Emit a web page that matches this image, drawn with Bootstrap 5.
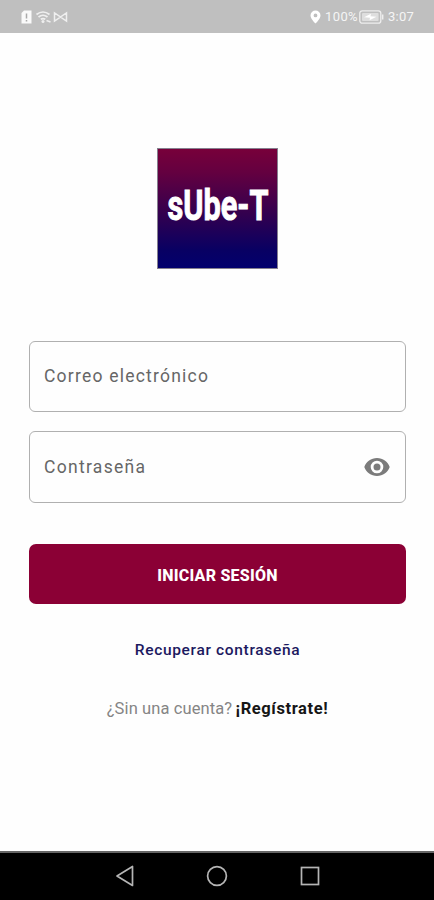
<!DOCTYPE html>
<html lang="es">
<head>
<meta charset="utf-8">
<meta name="viewport" content="width=device-width, initial-scale=1">
<title>sUbe-T</title>
<link href="https://cdn.jsdelivr.net/npm/bootstrap@5.3.0/dist/css/bootstrap.min.css" rel="stylesheet">
<style>
body{font-family:Roboto,"Liberation Sans",sans-serif;height:900px;overflow:hidden;background:#fefefe}
svg{display:block;flex-shrink:0;overflow:visible}
.statusbar{height:33px;background:#bfbfbf;color:#f5f5f5;font-size:13px;padding:1px 20px 0 20px;line-height:16px}
.pct{letter-spacing:.35px;margin:0 1px 0 4px}
.clock{letter-spacing:.25px;margin-left:4px}
.main-area{padding:115px 28px 0 29px}
.brand{margin-bottom:72px}
.field{height:71px;border:1px solid #b0b0b0;border-radius:6px;padding:0 15px 0 14px;color:#666;font-size:17.5px;background:#fefefe}
.field-mail{letter-spacing:1.22px;margin-bottom:19px}
.field-pass{height:72px;letter-spacing:1.3px;margin-bottom:41px}
.btn-login,.btn-login:hover{height:60px;background:#8b0035;color:#fff;border:0;border-radius:7px;font-weight:800;font-size:16px;letter-spacing:.22px;padding:3px 0 0}
.recover{font-size:15.5px;font-weight:500;color:#1c1960;letter-spacing:.66px;margin-top:35px;line-height:22px}
.signup{font-size:16.5px;color:#858585;margin-top:36px;line-height:24px;letter-spacing:.1px}
.signup a{color:#161616;font-weight:700;letter-spacing:.6px;margin-left:-1px}
.navkeys{height:49px;background:#000;border-top:2px solid #666;padding:0 113px 2px 113px}
</style>
<script src="https://cdn.jsdelivr.net/npm/bootstrap@5.3.0/dist/js/bootstrap.bundle.min.js"></script>
</head>
<body class="d-flex flex-column m-0">
<header class="statusbar d-flex justify-content-between align-items-center">
  <div class="d-flex align-items-center">
    <svg width="50" height="16" viewBox="0 0 50 16">
      <path d="M4 1.500h7.500v13H1.500V4z" fill="#fafafa"/><path d="M6.500 4.500v5M6.500 11v1.500" stroke="#aaa" stroke-width="1.500"/>
      <g fill="none" stroke="#efefef" stroke-width="1.700"><path d="M16.500 5.500q6.500-5 13 0M18.500 8q4.500-3.500 9 0M20.800 10.300q2.200-1.500 4.500 0"/><path d="M34.500 4v8l6-4zM46.500 4v8l-6-4z" stroke-width="1.500"/></g>
      <circle cx="23" cy="12.600" r="1.500" fill="#efefef"/><path d="M26.500 11.500l4 1.500" stroke="#efefef" stroke-width="1.500"/>
    </svg>
  </div>
  <div class="d-flex align-items-center">
    <svg width="11" height="14" viewBox="0 0 11 14"><path fill="#fff" fill-rule="evenodd" d="M5.500.5A5 5 0 0 0 .5 5.500C.5 9 5.500 13.500 5.500 13.500S10.500 9 10.500 5.500A5 5 0 0 0 5.500.5zM5.500 3.500a1.900 1.900 0 1 1 0 3.800 1.900 1.900 0 0 1 0-3.800z"/></svg>
    <span class="pct">100%</span>
    <svg width="25" height="14" viewBox="0 0 25 14"><rect x=".8" y=".8" width="21" height="12.400" rx="2.500" fill="none" stroke="#eee" stroke-width="1.300"/><rect x="3" y="3" width="16.600" height="8" rx="1" fill="#dedede"/><path d="M5 7.300l7-3.500-.5 2.500 6 .5-7 3.500.5-2.500z" fill="#fff"/><path d="M23.700 4.500v5" stroke="#eee" stroke-width="1.500"/></svg>
    <span class="clock">3:07</span>
  </div>
</header>
<main class="main-area flex-grow-1">
  <svg class="brand mx-auto" width="121" height="121" viewBox="0 0 121 121" role="img">
    <defs><linearGradient id="fade" x1="0" y1="0" x2="0" y2="1"><stop offset="0" stop-color="#78003a"/><stop offset=".2" stop-color="#640040"/><stop offset=".55" stop-color="#32004f"/><stop offset=".85" stop-color="#080063"/><stop offset="1" stop-color="#02006e"/></linearGradient></defs>
    <rect x=".5" y=".5" width="120" height="120" fill="url(#fade)" stroke="#85808f"/>
    <text x="10.500" y="72" font-family="Roboto" font-weight="700" font-size="43" fill="#fff" stroke="#fff" stroke-width="1" textLength="101" lengthAdjust="spacingAndGlyphs">sUbe-T</text>
  </svg>
  <div class="field field-mail d-flex align-items-center"><span>Correo electrónico</span></div>
  <div class="field field-pass d-flex align-items-center justify-content-between"><span>Contraseña</span>
    <svg width="26" height="20" viewBox="0 0 26 20"><path fill="#7b7b7b" fill-rule="evenodd" d="M13 1C7 1 2.300 4.700.3 10 2.300 15.300 7 19 13 19S23.700 15.300 25.700 10C23.700 4.700 19 1 13 1zM13 16.300A6.300 6.300 0 1 1 13 3.700a6.300 6.300 0 0 1 0 12.600zM13 6.500a3.500 3.500 0 1 0 0 7 3.500 3.500 0 0 0 0-7z"/></svg>
  </div>
  <button class="btn btn-login w-100 d-flex align-items-center justify-content-center" type="button"><span>INICIAR SESIÓN</span></button>
  <div class="text-center recover"><span>Recuperar contraseña</span></div>
  <div class="text-center signup">¿Sin una cuenta? <a class="text-decoration-none" href="#">¡Regístrate!</a></div>
</main>
<footer class="navkeys d-flex align-items-center justify-content-between">
  <svg width="22" height="22" viewBox="0 0 22 22" fill="none" stroke="#b5b5b5" stroke-width="1.700" stroke-linejoin="round"><path d="M4 11L19.500 1.500v19z"/></svg>
  <svg width="22" height="22" viewBox="0 0 22 22" fill="none" stroke="#b5b5b5" stroke-width="1.700"><circle cx="11" cy="11" r="9.400"/></svg>
  <svg width="22" height="22" viewBox="0 0 22 22" fill="none" stroke="#b5b5b5" stroke-width="1.700"><rect x="2.500" y="2.500" width="17" height="17"/></svg>
</footer>
</body>
</html>
